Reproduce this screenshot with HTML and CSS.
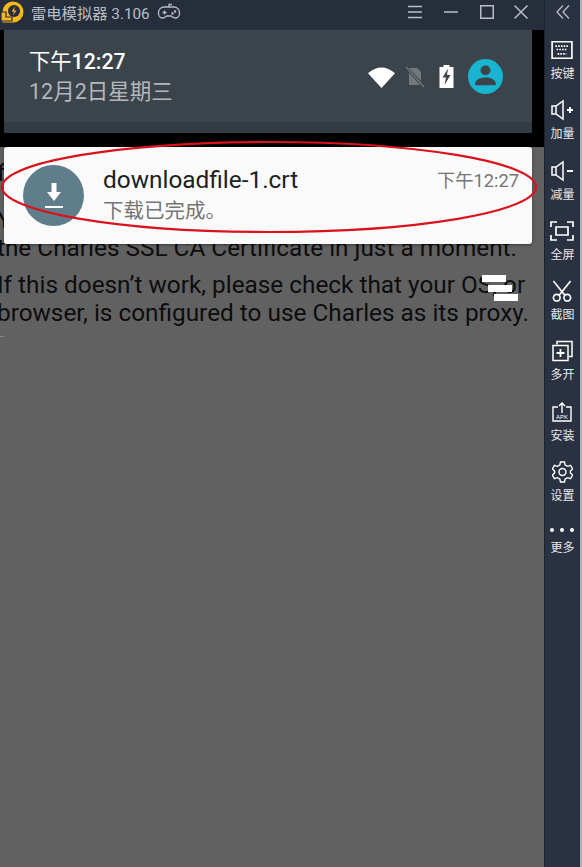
FILE: index.html
```html
<!DOCTYPE html>
<html lang="en">
<head>
    <meta charset="UTF-8">
    <meta name="viewport" content="width=device-width, initial-scale=1.0">
    <title>雷电模拟器</title>
    <link rel="stylesheet" href="styles.css">
</head>
<body>
    <div class="window">
        <div class="main">
            <div class="titlebar">
                <svg class="logo" width="24" height="24" viewBox="0 0 24 24">
                    <path d="M13 1.500a10.500 10.500 0 0 1 0 21H2.500V12A10.500 10.500 0 0 1 13 1.500z" fill="#f5b81f"/>
                    <path d="M1 12h5v5h6v4H1z" fill="#f5b81f" stroke="#262d3b" stroke-width="1.200"/>
                    <circle cx="14" cy="11" r="6" fill="#262d3b"/>
                    <path d="M15 6.500l-3.500 5H14l-1 4 3.500-5H14z" fill="#f5b81f"/>
                </svg>
                <span class="app-name">雷电模拟器 3.106</span>
                <svg class="gamepad" width="24" height="20" viewBox="0 0 24 20" fill="none" stroke="#b9bec6" stroke-width="1.300">
                    <path d="M7 5h10a5.500 5.500 0 0 1 5.500 5.500v1A4.500 4.500 0 0 1 18 16c-2 0-3-2-4-2h-4c-1 0-2 2-4 2a4.500 4.500 0 0 1-4.500-4.500v-1A5.500 5.500 0 0 1 7 5z"/>
                    <path d="M12 5V2.500h3M5.500 10.500h4M7.500 8.500v4"/>
                    <circle cx="15.500" cy="11.500" r=".6"/><circle cx="18" cy="9.500" r=".6"/>
                </svg>
                <div class="win-btns">
                    <svg width="14" height="14" viewBox="0 0 14 14" stroke="#b9bec6" stroke-width="1.500"><path d="M0 1.500h14M0 7h14M0 12.500h14"/></svg>
                    <svg width="14" height="14" viewBox="0 0 14 14" stroke="#b9bec6" stroke-width="1.500"><path d="M0 7h14"/></svg>
                    <svg width="14" height="14" viewBox="0 0 14 14" fill="none" stroke="#b9bec6" stroke-width="1.500"><path d="M.750.750h12.500v12.500H.750z"/></svg>
                    <svg class="close-btn" width="14" height="14" viewBox="0 0 14 14" stroke="#b9bec6" stroke-width="1.500"><path d="M.500.500l13 13M13.500.500l-13 13"/></svg>
                </div>
            </div>

            <div class="screen">
                <div class="page-text">
                    <p>f</p>
                    <p>Y<br>the Charles SSL CA Certificate in just a moment.</p>
                    <p>If this doesn’t work, please check that your OS, or<br>browser, is configured to use Charles as its proxy.</p>
                    <div class="stray"></div>
                </div>

                <div class="shade">
                    <div class="qs-panel">
                        <div class="qs-header">
                            <div>
                                <div class="qs-time">下午<b>12:27</b></div>
                                <div class="qs-date">12月2日星期三</div>
                            </div>
                            <div class="qs-icons">
                                <svg class="wifi" width="27" height="22" viewBox="0 0 28 20" preserveAspectRatio="none"><path d="M0 6.500Q14-4 28 6.500L14 20z" fill="#fff"/></svg>
                                <svg width="20" height="22" viewBox="0 0 20 22"><path d="M4 2h8l4 4v13H4z" fill="#72797e"/><path d="M1 1l18 20" stroke="#3c444b" stroke-width="3"/><path d="M1 1l18 20" stroke="#72797e" stroke-width="1.200"/></svg>
                                <svg width="17" height="23" viewBox="0 0 16 23"><path d="M5 0h6v2h4v21H1V2h4z" fill="#fff"/><path d="M9.500 3.500L4 12.500h3.500L6 20l6-10H8.500z" fill="#3c444b"/></svg>
                                <svg width="35" height="35" viewBox="0 0 34 34"><circle cx="17" cy="17" r="17" fill="#18b4d0"/><circle cx="17" cy="11" r="4.800" fill="#3c444b"/><path d="M7 24c0-4 5-6 10-6s10 2 10 6v1.500H7z" fill="#3c444b"/></svg>
                            </div>
                        </div>
                        <div class="qs-footer"></div>
                    </div>
                </div>

                <div class="notif">
                    <div class="notif-icon">
                        <svg width="20" height="26" viewBox="0 0 20 26" fill="#fff"><path d="M7.500 0h5v9H17l-7 9-7-9h4.500z"/><path d="M1 23h18v2H1z"/></svg>
                    </div>
                    <div class="notif-body">
                        <div class="notif-title">downloadfile-1.crt</div>
                        <div class="notif-text">下载已完成。</div>
                    </div>
                    <div class="notif-time">下午12:27</div>
                </div>

                <svg class="circle-mark" width="544" height="120" viewBox="0 0 544 120">
                    <ellipse cx="269" cy="57" rx="267" ry="45" fill="none" stroke="#d9121c" stroke-width="2.200"/>
                </svg>

                <div class="float-bars">
                    <span></span>
                    <span></span>
                    <span></span>
                </div>
            </div>
        </div>

        <div class="sidebar">
            <svg class="collapse" width="14" height="14" viewBox="0 0 14 14" fill="none" stroke="#b9bec6" stroke-width="1.300"><path d="M7 .500L1 7l6 6.500M13 .500L7 7l6 6.500"/></svg>

            <div class="side-btn">
                <svg width="22" height="18" viewBox="0 0 20 17" fill="none" stroke="#fff" stroke-width="1.500"><path d="M1 1h18v15H1z"/><path d="M4 5h12M5 8h10M6 12h8" stroke-dasharray="1.500 1"/></svg>
                <span>按键</span>
            </div>
            <div class="side-btn">
                <svg width="22" height="20" viewBox="0 0 22 20" fill="none" stroke="#fff" stroke-width="1.500"><path d="M1 6h4l7-5v18l-7-5H1zM5 6v8"/><path d="M16 10h6M19 7v6" stroke-width="2"/></svg>
                <span>加量</span>
            </div>
            <div class="side-btn">
                <svg width="22" height="20" viewBox="0 0 22 20" fill="none" stroke="#fff" stroke-width="1.500"><path d="M1 6h4l7-5v18l-7-5H1zM5 6v8"/><path d="M16 10h6" stroke-width="2"/></svg>
                <span>减量</span>
            </div>
            <div class="side-btn">
                <svg width="24" height="20" viewBox="0 0 24 20" fill="none" stroke="#fff" stroke-width="1.700"><path d="M1 6V1h6M17 1h6v5M23 14v5h-6M7 19H1v-5"/><path d="M6 6h12v8H6z"/></svg>
                <span>全屏</span>
            </div>
            <div class="side-btn">
                <svg width="22" height="23" viewBox="0 0 22 23" fill="none" stroke="#fff" stroke-width="1.700"><path d="M2 1l12 15M20 1L8 16"/><circle cx="5.500" cy="18.500" r="3.500"/><circle cx="16.500" cy="18.500" r="3.500"/></svg>
                <span>截图</span>
            </div>
            <div class="side-btn">
                <svg width="21" height="21" viewBox="0 0 21 21" fill="none" stroke="#fff" stroke-width="1.500"><path d="M5 4V1h15v15h-4"/><path d="M1 5h15v15H1z"/><path d="M4.500 12.500h8M8.500 8.500v8" stroke-width="1.800"/></svg>
                <span>多开</span>
            </div>
            <div class="side-btn">
                <svg width="20" height="20" viewBox="0 0 20 20" fill="none" stroke="#fff" stroke-width="1.400">
                    <path d="M6 5H1v14h18V5h-5"/><path d="M10 11V1M7 4l3-3 3 3"/>
                    <text x="10" y="16.500" text-anchor="middle" class="apk-label">APK</text>
                </svg>
                <span>安装</span>
            </div>
            <div class="side-btn">
                <svg width="21" height="22" viewBox="0 0 21 22" fill="none" stroke="#fff" stroke-width="1.400"><path d="M8.500 1h4l.7 3 2.400 1.300 3-.9 2 3.500-2.200 2.100v2l2.200 2.100-2 3.500-3-.9-2.400 1.300-.7 3h-4l-.7-3-2.400-1.300-3 .9-2-3.500L2.600 12v-2L.4 7.900l2-3.500 3 .9L7.800 4z"/><circle cx="10.500" cy="11" r="3.500"/></svg>
                <span>设置</span>
            </div>
            <div class="side-btn">
                <div class="dots"><i></i><i></i><i></i></div>
                <span>更多</span>
            </div>
        </div>
        <div class="edge"></div>
    </div>
</body>
</html>
```

FILE: styles.css
```css
* {
    box-sizing: border-box;
}
html, body {
    margin: 0;
    height: 100%;
    overflow: hidden;
}
body {
    font-family: Roboto, "Noto Sans CJK SC", sans-serif;
    background-color: #2a3140;
}
.window {
    display: flex;
    height: 867px;
}
.main {
    width: 544px;
    display: flex;
    flex-direction: column;
}

/* title bar */
.titlebar {
    height: 30px;
    background-color: #262d3b;
    display: flex;
    align-items: center;
    padding-bottom: 7px;
    color: #b9bec6;
    font-size: 15.300px;
}
.logo {
    margin-right: 7px;
    flex: none;
}
.app-name {
    white-space: nowrap;
}
.gamepad {
    margin-left: 7px;
}
.win-btns {
    margin-left: auto;
    margin-right: 16px;
    display: flex;
    gap: 22px;
}
.close-btn {
    margin-left: -2px;
}

/* android screen */
.screen {
    position: relative;
    flex: 1;
    overflow: hidden;
    background-color: #616161;
}
.page-text {
    padding-top: 129px;
    margin-left: -3px;
    font-size: 24.350px;
    line-height: 28px;
    color: #0d0d0d;
    white-space: nowrap;
}
.page-text p {
    margin: 0 0 9px 0;
}
.page-text p:first-child {
    margin-bottom: 19px;
}
.stray {
    width: 7px;
    height: 4px;
    margin-top: 1px;
    border-top: 1px solid #858585;
}
.shade {
    position: absolute;
    top: 0;
    left: 0;
    right: 0;
    height: 117px;
    background-color: #000;
    padding-left: 4px;
}
.qs-panel {
    width: 528px;
    height: 103px;
    border-radius: 0 0 2px 2px;
    background-color: #3c444b;
    display: flex;
    flex-direction: column;
}
.qs-header {
    height: 92px;
    display: flex;
    justify-content: space-between;
    align-items: flex-start;
    padding: 18px 29px 0 25px;
}
.qs-time {
    color: #fff;
    font-size: 21.300px;
    line-height: 27px;
}
.qs-time b {
    font-weight: 500;
}
.qs-date {
    color: #b4b8bc;
    font-size: 21.500px;
    line-height: 33px;
}
.qs-icons {
    display: flex;
    align-items: center;
    gap: 13px;
    margin-top: 11px;
}
.qs-icons .wifi {
    margin-right: -3px;
}
.qs-footer {
    flex: 1;
    background-color: #343c43;
    border-radius: 0 0 2px 2px;
}

/* heads up notification */
.notif {
    position: absolute;
    top: 117px;
    left: 4px;
    width: 528px;
    height: 97px;
    background-color: #fafafa;
    border-radius: 3px;
    box-shadow: 0 1px 3px rgba(0, 0, 0, 0.4);
    display: flex;
    padding: 18px 13px 0 19px;
}
.notif-icon {
    width: 61px;
    height: 61px;
    border-radius: 50%;
    background-color: #607d8b;
    display: flex;
    align-items: center;
    justify-content: center;
    flex: none;
}
.notif-body {
    margin-left: 19px;
    margin-top: 1px;
    flex: 1;
}
.notif-title {
    font-size: 24.400px;
    line-height: 28px;
    color: #212121;
}
.notif-text {
    font-size: 20.500px;
    line-height: 24px;
    margin-top: 5px;
    color: #757575;
}
.notif-time {
    font-size: 18.300px;
    line-height: 22px;
    margin-top: 5px;
    color: #757575;
}
.circle-mark {
    position: absolute;
    top: 100px;
    left: 0;
}
.float-bars {
    position: absolute;
    top: 245px;
    left: 482px;
    display: flex;
    flex-direction: column;
}
.float-bars span {
    display: block;
    width: 24px;
    height: 7px;
    margin-bottom: 2.500px;
    background-color: #fff;
}
.float-bars span:nth-child(2) {
    margin-left: 6px;
}
.float-bars span:nth-child(3) {
    margin-left: 12px;
}

/* right tool bar */
.sidebar {
    width: 36px;
    border-left: 1px solid #1b2330;
    background-color: #2a3140;
    display: flex;
    flex-direction: column;
    align-items: center;
    padding-top: 5px;
}
.collapse {
    margin-bottom: 22px;
}
.side-btn {
    display: flex;
    flex-direction: column;
    align-items: center;
    height: 60.250px;
    color: #e6e8eb;
    font-size: 12px;
    line-height: 14px;
    white-space: nowrap;
}
.side-btn svg {
    height: 22px;
    margin-top: -2px;
    margin-bottom: 6px;
}
.side-btn .apk-label {
    font-family: "Liberation Sans", sans-serif;
    font-size: 6px;
    fill: #fff;
    stroke: none;
}
.dots {
    display: flex;
    gap: 6px;
    height: 24px;
    align-items: center;
    margin-top: -5px;
    margin-bottom: -1px;
}
.dots i {
    width: 4px;
    height: 4px;
    border-radius: 50%;
    background-color: #fff;
}
.edge {
    width: 2px;
    background-color: #aeb0b3;
}
```
